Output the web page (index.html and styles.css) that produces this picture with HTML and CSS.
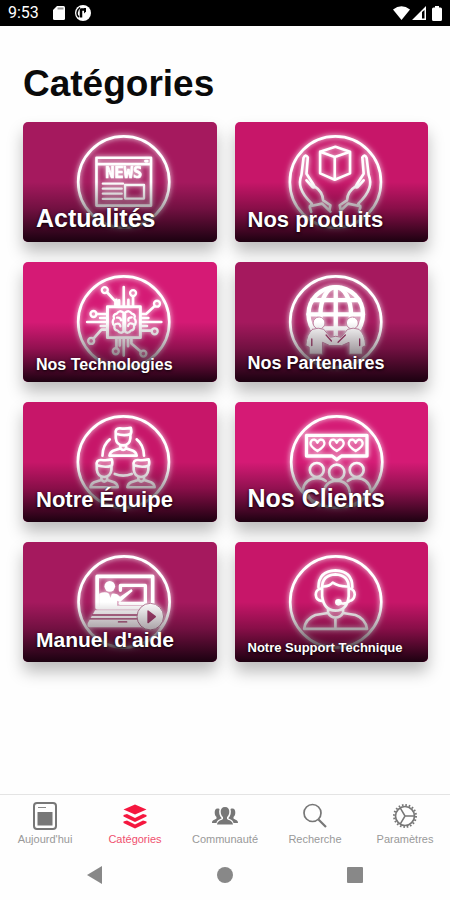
FILE: index.html
```
<!DOCTYPE html>
<html lang="fr">
<head>
    <meta charset="UTF-8">
    <meta name="viewport" content="width=device-width, initial-scale=1.0">
    <title>Catégories</title>
    <link rel="stylesheet" href="styles.css">
</head>
<body>
    <header class="status-bar">
        <span class="time">9:53</span>
        <svg class="status-icon" width="12" height="14" viewBox="0 0 12 14"><path fill="#fff" d="M4 0h6.500q1.500 0 1.500 1.500v11q0 1.500-1.500 1.500h-9Q0 14 0 12.500V4z"/><path stroke="#999" stroke-width="2" d="M4.500 2.500h6"/></svg>
        <svg class="status-icon" width="16" height="16" viewBox="0 0 16 16"><circle cx="8" cy="8" r="8" fill="#fff"/><path fill="none" stroke="#000" stroke-width="1.500" d="M5 2.500Q2 5 2 8t2 4"/><path fill="none" stroke="#000" stroke-width="2.500" d="M6 3.500v9M6 4.500h4"/><path fill="#000" d="M9 3h2v3.500L9 8.500z"/></svg>
        <div class="status-right">
            <svg width="17" height="14" viewBox="0 0 17 14"><path fill="#fff" d="M0 3.500Q8.500-3 17 3.500L8.500 14z"/></svg>
            <svg width="14" height="14" viewBox="0 0 14 14"><path fill="#fff" fill-rule="evenodd" d="M14 0v14H0zM10 6v6.500h2.500V4z"/></svg>
            <svg class="battery" width="10" height="15" viewBox="0 0 10 15"><path fill="#fff" d="M3 0h4v1.500h1.500Q10 1.500 10 3v10.500q0 1.500-1.500 1.500h-7Q0 15 0 13.500V3q0-1.500 1.500-1.500H3z"/></svg>
        </div>
    </header>

    <main>
        <h1>Catégories</h1>
        <div class="grid">
            <a href="#" class="card dark">
                <svg class="art" viewBox="24 21 582 360">
                    <circle cx="327" cy="201" r="137"/>
                    <path d="M245 128h164v144H245zM245 147h164M392 138h6"/>
                    <text class="news" x="327" y="188" text-anchor="middle">NEWS</text>
                    <path stroke-width="7" d="M264 206h61M264 221h57M264 236h57M264 252h57M331 210h57v41h-57z"/>
                </svg>
                <span class="name size-xl">Actualités</span>
            </a>
            <a href="#" class="card mid">
                <svg class="art" viewBox="30 21 582 360">
                    <circle cx="332" cy="201" r="137"/>
                    <path d="M286 110l46-15 44 15v65l-46 19-44-19zM286 110l44 16 46-16M330 126v68"/>
                    <path d="M259 291l-4-14 6-11q-26-24-33-47-6-18 2-40l6-50q6-14 13-2l-4 49 20 31q8 12-1 10l-19-21M267 213q27 17 28 43l22 15-3 16M255 274l37-8 25 24"/>
                    <path d="M403 291l4-14-6-11q26-24 33-47 6-18-2-40l-6-50q-6-14-13-2l4 49-20 31q-8 12 1 10l19-21M395 213q-27 17-28 43l-22 15 3 16M407 274l-37-8-25 24"/>
                </svg>
                <span class="name size-lg">Nos produits</span>
            </a>
            <a href="#" class="card bright">
                <svg class="art" viewBox="24 21 582 360">
                    <circle cx="327" cy="201" r="137"/>
                    <path stroke-width="9" d="M278 155h99v93h-99z"/>
                    <path d="M305 152v-18M313 152v-16M327 152V96M341 152v-18M355 152v-28M302 152v-13l-24-26M305 252v27M327 252v50M315 252v20M340 252v22M350 252v14l28 24M274 201h-57M274 177h-28M274 189h-18M274 213h-16M274 224h-14l-24 27M381 201h59M381 189h20M381 177h13l25-23M381 213h16M381 227h30"/>
                    <g stroke-width="7"><circle cx="270" cy="105" r="9"/><circle cx="355" cy="114" r="9"/><circle cx="427" cy="146" r="9"/><circle cx="236" cy="177" r="9"/><circle cx="229" cy="258" r="9"/><circle cx="420" cy="229" r="9"/><circle cx="303" cy="289" r="9"/><circle cx="386" cy="296" r="9"/></g>
                    <path stroke-width="7" d="M326 173q-12-10-20 3-13 3-8 14-9 12 1 22-2 14 10 15 9 11 17 3zM331 173q12-10 20 3 13 3 8 14 9 12-1 22 2 14-10 15-9 11-17 3zM307 188q10-2 12 8M303 207q12-4 14 7M351 187q-12 0-10 10M355 207q-12-6-15 6"/>
                </svg>
                <span class="name size-sm">Nos Technologies</span>
            </a>
            <a href="#" class="card dark">
                <svg class="art" viewBox="30 21 582 360">
                    <circle cx="333" cy="201" r="137"/>
                    <g stroke-width="13"><circle cx="333" cy="178" r="82"/><ellipse cx="333" cy="178" rx="46" ry="82"/><path d="M333 96v164M251 178h164M262 135h142M262 220h142"/></g>
                    <g class="solid outlined"><circle cx="283" cy="204" r="18"/><circle cx="383" cy="204" r="18"/><path d="M263 223q18-7 34 0l20 24q16-6 32 0l20-24q16-7 34 0 18 15 20 49l-10 5v21h-40v-36l-22 10h-36l-22-10v36h-40v-21l-10-5q2-34 20-49z"/></g>
                    <path class="cut" d="M261 252v20M405 252v20M304 240l16 18M362 240l-22 22"/>
                </svg>
                <span class="name size-md">Nos Partenaires</span>
            </a>
            <a href="#" class="card mid">
                <svg class="art" viewBox="24 21 582 360">
                    <defs>
                        <g id="member">
                            <path d="M-22-42q-3-18 13-17 20 2 32-2 4 12-1 21M-22-43v13q2 21 22 22 20-1 22-22v-12q-18 7-44-1zM-8-8v9l-22 7q-9 4-11 15H41Q39 12 30 8L9 1v-9M-8 1Q0 11 9 1"/>
                        </g>
                    </defs>
                    <circle cx="326" cy="201" r="137"/>
                    <path d="M285 133q-21 16-22 49M366 133q21 16 22 49M300 237q25 10 51 0"/>
                    <use href="#member" x="325" y="159"/>
                    <use href="#member" x="268" y="254"/>
                    <use href="#member" x="379" y="254"/>
                </svg>
                <span class="name size-lg">Notre Équipe</span>
            </a>
            <a href="#" class="card bright">
                <svg class="art" viewBox="30 21 582 360">
                    <defs><path id="heart" d="M0 17Q-22 3-21-7q2-11 12-10Q-3-15 0-8q3-7 9-9 10-1 12 10Q22 3 0 17z"/></defs>
                    <circle cx="336" cy="201" r="137"/>
                    <path stroke-width="10" d="M245 121h182v62h-77l-14 11-14-11h-77z"/>
                    <g stroke-width="7"><use href="#heart" x="278" y="151"/><use href="#heart" x="336" y="151"/><use href="#heart" x="393" y="151"/></g>
                    <circle cx="276" cy="225" r="21"/><circle cx="336" cy="232" r="23"/><circle cx="396" cy="225" r="21"/>
                    <path d="M234 286q5-35 42-37 16 0 27 9M438 286q-5-35-42-37-16 0-27 9M296 300q2-41 40-43 38 2 40 43M250 300q8 25 33 32M422 300q-8 25-33 32"/>
                </svg>
                <span class="name size-xl">Nos Clients</span>
            </a>
            <a href="#" class="card dark">
                <svg class="art" viewBox="24 21 582 360">
                    <circle cx="328" cy="201" r="137"/>
                    <path stroke-width="11" d="M247 124h167v94H247z"/>
                    <path stroke-width="10" d="M317 166v-15h75v54h-76"/>
                    <g class="solid"><circle cx="285" cy="154" r="16"/><path d="M253 176q18-8 30 0l4 13 4-13q14-4 25 9l34-23 4 6-38 33-9-4v22h-54z"/><path d="M241 226h177l27 38q3 13-8 13H223q-7-3-4-13z"/></g>
                    <path class="cut" d="M233 240h135M226 252h145M311 261h25"/>
                    <circle class="play" cx="407" cy="245" r="40"/>
                    <path class="cut" fill="#a5406f" d="M400 228l22 17-22 18z"/>
                </svg>
                <span class="name size-lg long">Manuel d'aide</span>
            </a>
            <a href="#" class="card mid">
                <svg class="art" viewBox="30 21 582 360">
                    <circle cx="333" cy="201" r="137"/>
                    <path d="M281 157q0-49 51-51 51 2 51 51M292 158q0-38 40-40 40 2 40 40M292 154q20 2 32-11 20 13 48 11M292 156v27q5 43 40 44 36-1 40-44v-27M287 161q-14 3-14 18 1 17 17 19M377 161q13 3 13 18-2 17-16 19-10 11-26 7"/>
                    <circle class="solid" cx="341" cy="202" r="10"/>
                    <path d="M310 222v12l-38 6q-31 12-34 42h189q-4-31-35-42l-37-6v-12M310 234q8 13 22 14 15-1 23-14M332 248v34"/>
                </svg>
                <span class="name size-xs">Notre Support Technique</span>
            </a>
        </div>
    </main>

    <nav class="tab-bar">
        <a href="#" class="tab">
            <svg width="28" height="28" viewBox="0 0 28 28"><rect x="3" y="1" width="22" height="26" rx="3" fill="none" stroke="#777" stroke-width="2"/><path stroke="#888" d="M7 5.500h8"/><rect x="6.500" y="10" width="15" height="13.500" fill="#777"/></svg>
            <span>Aujourd'hui</span>
        </a>
        <a href="#" class="tab active">
            <svg width="28" height="28" viewBox="0 0 28 28"><path fill="#f5173f" d="M14 2.500L25.500 7.500 14 12.500 2.500 7.500zM2.500 13l3.500-1 8 4 8-4 3.500 1v1.500L14 20 2.500 14.500zM2.500 19.500L6 18.500l8 4 8-4 3.500 1V21L14 26.500 2.500 21z"/></svg>
            <span>Catégories</span>
        </a>
        <a href="#" class="tab">
            <svg width="28" height="28" viewBox="0 0 28 28"><g fill="#777"><path d="M14 5c3 0 4.500 2 4.300 5-.2 2.500-1 4-2.300 5v2c2 1.500 5.500 1.500 6 5.500H6c.5-4 4-4 6-5.500v-2c-1.300-1-2.100-2.500-2.300-5C9.500 7 11 5 14 5z"/><path d="M8.500 7C5 5.500 3.500 8 3.700 11c.1 2 .8 3 1.800 4v1.500C4 18 1 17.500 1 21h4.500c.5-3 3-3.500 5-4.500V16C8.500 14 7.500 10 8.500 7zM19.500 7c3.500-1.500 5 1 4.800 4-.1 2-.8 3-1.800 4v1.500c1.500 1.500 4.500 1 4.500 4.500h-4.500c-.5-3-3-3.500-5-4.500V16c2-2 3-6 2-9z"/></g></svg>
            <span>Communauté</span>
        </a>
        <a href="#" class="tab">
            <svg width="28" height="28" viewBox="0 0 28 28"><g fill="none" stroke="#777" stroke-width="1.700"><circle cx="11.500" cy="11" r="8.500"/><path d="M17.500 17.500l7.500 7.500" stroke-width="2.200"/></g></svg>
            <span>Recherche</span>
        </a>
        <a href="#" class="tab">
            <svg width="28" height="28" viewBox="0 0 28 28"><g fill="none" stroke="#777"><circle cx="14" cy="14" r="9.500" stroke-width="1.700"/><circle cx="14" cy="14" r="11" stroke-width="2" stroke-dasharray="1.600 1.856"/><path stroke-width="1.500" d="M14 14h9.500M14 14L9.200 5.800M14 14l-4.800 8.200"/></g></svg>
            <span>Paramètres</span>
        </a>
    </nav>

    <footer class="system-nav">
        <button type="button" aria-label="Retour"><svg width="18" height="18" viewBox="0 0 18 18"><path fill="#888" d="M1 9L16 0v18z"/></svg></button>
        <button type="button" aria-label="Accueil"><svg width="18" height="18" viewBox="0 0 18 18"><circle cx="9" cy="9" r="8" fill="#888"/></svg></button>
        <button type="button" aria-label="Applications"><svg width="18" height="18" viewBox="0 0 18 18"><rect x="1" y="1" width="16" height="16" rx="1" fill="#888"/></svg></button>
    </footer>
</body>
</html>
```
FILE: styles.css
```
* {
    box-sizing: border-box;
}

body {
    display: flex;
    flex-direction: column;
    min-height: 100vh;
    margin: 0;
    background-color: #fefefe;
    font-family: "Liberation Sans", Arial, sans-serif;
}

a {
    text-decoration: none;
}

svg {
    display: block;
}

/* Status bar */
.status-bar {
    display: flex;
    align-items: center;
    height: 26px;
    padding: 0 8px;
    background-color: #000;
    color: #fff;
}

.time {
    font-family: Roboto, sans-serif;
    font-size: 16px;
    line-height: 26px;
    margin-right: 4px;
}

.status-icon {
    margin-left: 10px;
}

.status-right {
    display: flex;
    align-items: center;
    gap: 2px;
    margin-left: auto;
}

.battery {
    margin-left: 4px;
}

/* Categories */
main {
    flex: 1;
    padding: 36px 22px 24px 23px;
}

h1 {
    margin: 0 0 16px;
    font-size: 37px;
    line-height: 44px;
    color: #0a0a0a;
}

.grid {
    display: grid;
    grid-template-columns: 1fr 1fr;
    gap: 20px 18px;
}

.card {
    position: relative;
    display: flex;
    align-items: flex-end;
    height: 120px;
    padding: 0 13px 8px;
    border-radius: 5px;
    overflow: hidden;
    color: #fff;
    box-shadow: 0 10px 16px rgba(0, 0, 0, 0.26);
}

.dark {
    background-color: #a5195e;
}

.mid {
    background-color: #c71669;
}

.bright {
    background-color: #d51a75;
}

/* Neon drawing behind the name */
.art {
    position: absolute;
    inset: 0;
    width: 100%;
    height: 100%;
    fill: none;
    stroke: #fff;
    stroke-width: 8px;
    stroke-linejoin: round;
    stroke-linecap: round;
    filter: drop-shadow(0 0 2px rgba(255, 255, 255, 0.6)) drop-shadow(0 0 3px rgba(255, 255, 255, 0.4));
}

.art .solid {
    fill: #fff;
    stroke: none;
}

.art .outlined {
    stroke: #c68aa8;
    stroke-width: 3px;
}

.art .cut {
    stroke: #a5406f;
    stroke-width: 4px;
}

.art .play {
    fill: #fff;
    stroke: #b9809b;
    stroke-width: 3px;
}

.news {
    fill: #fff;
    stroke-width: 2px;
    font-family: "DejaVu Sans Mono", monospace;
    font-weight: bold;
    font-size: 46px;
}

.card::after {
    content: "";
    position: absolute;
    inset: 0;
    background: linear-gradient(rgba(20, 0, 12, 0) 50%, rgba(20, 0, 12, 0.35) 72%, rgba(20, 0, 12, 0.95));
}

.name {
    position: relative;
    z-index: 1;
    font-weight: bold;
    white-space: nowrap;
    text-shadow: 0 1px 3px #000;
}

.size-xl {
    font-size: 25px;
    line-height: 31px;
}

.size-lg {
    font-size: 22px;
    line-height: 29px;
}

.size-md {
    font-size: 18px;
    line-height: 21px;
}

.size-sm {
    font-size: 16px;
    line-height: 19px;
}

.size-xs {
    font-size: 13px;
    line-height: 13px;
}

.long {
    font-size: 21px;
}

/* Tabs */
.tab-bar {
    display: flex;
    border-top: 1px solid #e4e4e4;
    padding: 7px 0 3px;
}

.tab {
    display: flex;
    flex: 1;
    flex-direction: column;
    align-items: center;
    gap: 2px;
    font-size: 11px;
    line-height: 14px;
    color: #999;
}

.active {
    color: #f0506e;
}

/* System buttons */
.system-nav {
    display: flex;
    justify-content: space-around;
    align-items: center;
    height: 51px;
    padding: 0 30px;
}

.system-nav button {
    padding: 0;
    border: none;
    background: none;
}
```
